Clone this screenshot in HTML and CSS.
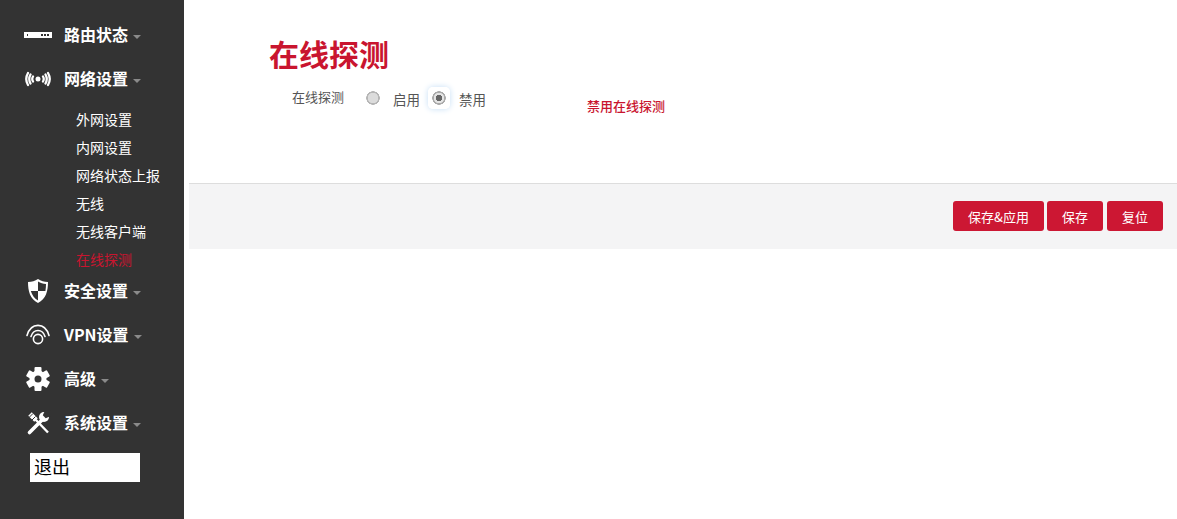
FILE: index.html
```html
<!DOCTYPE html>
<html lang="zh-CN">
<head>
    <meta charset="UTF-8">
    <meta name="viewport" content="width=device-width, initial-scale=1.0">
    <title>在线探测</title>
    <link rel="stylesheet" href="styles.css">
</head>
<body>
    <aside class="sidebar">
        <ul class="menu">
            <li>
                <a class="menu-item" href="#">
                    <svg class="menu-icon" viewBox="0 0 28 28"><path fill="#fff" d="M0 11h28v6H0z"/><path fill="#333" d="M3 13h1v2H3zM17 13h2v2h-2zM20 13h2v2h-2zM23 13h2v2h-2z"/></svg>
                    <span>路由状态</span><i class="caret"></i>
                </a>
            </li>
            <li>
                <a class="menu-item" href="#">
                    <svg class="menu-icon" viewBox="0 0 28 28" fill="none" stroke="#fff" stroke-width="2.300" stroke-linecap="round"><circle cx="14" cy="14" r="2.500" fill="#fff" stroke="none"/><path d="M9 11.500q-1.500 2.500 0 5M6.500 9.500q-2.500 4.500 0 9M4 8q-3.500 6 0 12M19 11.500q1.500 2.500 0 5M21.500 9.500q2.500 4.500 0 9M24 8q3.500 6 0 12"/></svg>
                    <span>网络设置</span><i class="caret"></i>
                </a>
                <ul class="submenu">
                    <li><a href="#">外网设置</a></li>
                    <li><a href="#">内网设置</a></li>
                    <li><a href="#">网络状态上报</a></li>
                    <li><a href="#">无线</a></li>
                    <li><a href="#">无线客户端</a></li>
                    <li><a class="active" href="#">在线探测</a></li>
                </ul>
            </li>
            <li>
                <a class="menu-item" href="#">
                    <svg class="menu-icon" viewBox="0 0 28 28"><path fill="#fff" d="M14 2c3 2 6 3 10 3 0 9-2 17-10 21C6 22 4 14 4 5c4 0 7-1 10-3z"/><path fill="#333" d="M14 4.500c2.500 1.500 5 2.200 8 2.500 0 2.200-.2 4.500-.6 7H14zM14 14v9.500c-3.700-2.200-6-5.500-7.200-9.500z"/></svg>
                    <span>安全设置</span><i class="caret"></i>
                </a>
            </li>
            <li>
                <a class="menu-item" href="#">
                    <svg class="menu-icon" viewBox="0 0 28 28" fill="none" stroke="#fff" stroke-width="1.600" stroke-linecap="round"><circle cx="14" cy="18" r="4.600"/><path d="M7 15.500c2.500-8 11.500-8 14 0M3 14.500c4-13.500 18-13.500 22 0"/></svg>
                    <span>VPN设置</span><i class="caret"></i>
                </a>
            </li>
            <li>
                <a class="menu-item" href="#">
                    <svg class="menu-icon" viewBox="0 0 28 28"><g fill="#fff"><rect x="10.500" y="2" width="7" height="24" rx="1"/><rect x="10.500" y="2" width="7" height="24" rx="1" transform="rotate(60 14 14)"/><rect x="10.500" y="2" width="7" height="24" rx="1" transform="rotate(120 14 14)"/><circle cx="14" cy="14" r="8.500"/></g><circle cx="14" cy="14" r="3.500" fill="#333"/></svg>
                    <span>高级</span><i class="caret"></i>
                </a>
            </li>
            <li>
                <a class="menu-item" href="#">
                    <svg class="menu-icon" viewBox="0 0 28 28" fill="none" stroke="#fff"><path stroke-width="5" d="M6 5l6 6"/><path stroke="#333" stroke-width="1" d="M5 8.500l4-4M8 11l3.500-3.500"/><path stroke-width="2.400" d="M11 10l13 13.500"/><path stroke-width="3.600" stroke-linecap="round" d="M5.500 23.500L18 11"/><circle cx="20" cy="8" r="5" fill="#fff" stroke="none"/><path fill="#333" stroke="none" d="M21 1.500l-2.200 4.800 2.900 2.900L27 7V1.500z"/></svg>
                    <span>系统设置</span><i class="caret"></i>
                </a>
            </li>
        </ul>
        <a class="logout" href="#">退出</a>
    </aside>

    <main class="content">
        <form class="section">
            <h2 class="title">在线探测</h2>
            <div class="field">
                <label class="field-label">在线探测</label>
                <div class="options">
                    <label class="option"><input type="radio" name="probe" value="1"><span>启用</span></label>
                    <label class="option option-on"><input type="radio" name="probe" value="0" checked><span>禁用</span></label>
                </div>
                <span class="field-note">禁用在线探测</span>
            </div>
        </form>
        <div class="actions">
            <button class="btn btn-wide" type="button">保存&amp;应用</button>
            <button class="btn btn-mid" type="button">保存</button>
            <button class="btn" type="button">复位</button>
        </div>
    </main>
</body>
</html>
```

FILE: styles.css
```css
* { box-sizing: border-box; }
html, body { height: 100%; }
body { margin: 0; display: flex; background: #fff; color: #444; font-family: "Noto Sans CJK SC", "Liberation Sans", sans-serif; overflow: hidden; }
a { text-decoration: none; }
ul { list-style: none; margin: 0; padding: 0; }

.sidebar { width: 184px; flex: none; background: #333; padding-top: 18px; }
.menu > li { margin-bottom: 10px; }
.menu > li:has(.submenu) { margin-bottom: 0; }
.menu-item { display: flex; align-items: center; height: 34px; padding-left: 24px; color: #fff; font-size: 16px; font-weight: 700; }
.menu-item span { margin-top: -2px; }
.menu-icon { width: 28px; height: 28px; margin-right: 12px; flex: none; }
.caret { width: 0; height: 0; margin: 3px 0 0 5px; border: 4px solid transparent; border-top-color: #8a8a8a; border-bottom: 0; }

.submenu { padding-top: 10px; }
.submenu a { display: block; height: 28px; line-height: 26px; padding-left: 76px; color: #fff; font-size: 14px; }
.submenu a.active { color: #c9152f; }

.logout { display: block; width: 110px; height: 29px; margin: 13px 0 0 30px; padding-left: 4px; background: #fff; color: #000; font-size: 18px; line-height: 27px; }

.content { flex: 1; margin-left: 5px; }
.section { height: 184px; padding: 32px 0 0 80px; border-bottom: 1px solid #ddd; }
.title { margin: 0; color: #c9152f; font-size: 30px; font-weight: 700; line-height: 42px; }
.field { display: flex; align-items: center; margin-top: 6px; padding-left: 23px; font-size: 13px; }
.field-label { width: 70px; margin-top: -2px; color: #555; }
.options { display: flex; gap: 8px; }
.option { display: flex; align-items: center; gap: 9px; color: #555; font-size: 13.500px; }
.option span { padding-top: 2px; }
.option input { appearance: none; width: 22px; height: 22px; margin: 0; padding: 0; border: 0; border-radius: 5px; background: radial-gradient(circle, #dcdcdc 0 5px, #b5b5b5 5.500px 6.500px, #fff 7px); }
.option-on input { background: radial-gradient(circle, #666 0 3px, #e4e4e4 3.500px 5px, #aaa 5.500px 6.500px, #fff 7px); box-shadow: 0 0 6px #c5def5; }
.field-note { margin: 16px 0 0 101px; color: #c9152f; font-weight: 500; }

.actions { display: flex; justify-content: flex-end; gap: 3px; height: 65px; padding: 17px 14px 0 0; background: #f4f4f5; }
.btn { width: 56px; height: 30px; padding: 0; border: 0; border-radius: 3px; background: #cc1733; color: #fff; font-family: inherit; font-size: 13px; }
.btn-wide { width: 91px; }
.btn-mid { margin-right: 1px; }
```
